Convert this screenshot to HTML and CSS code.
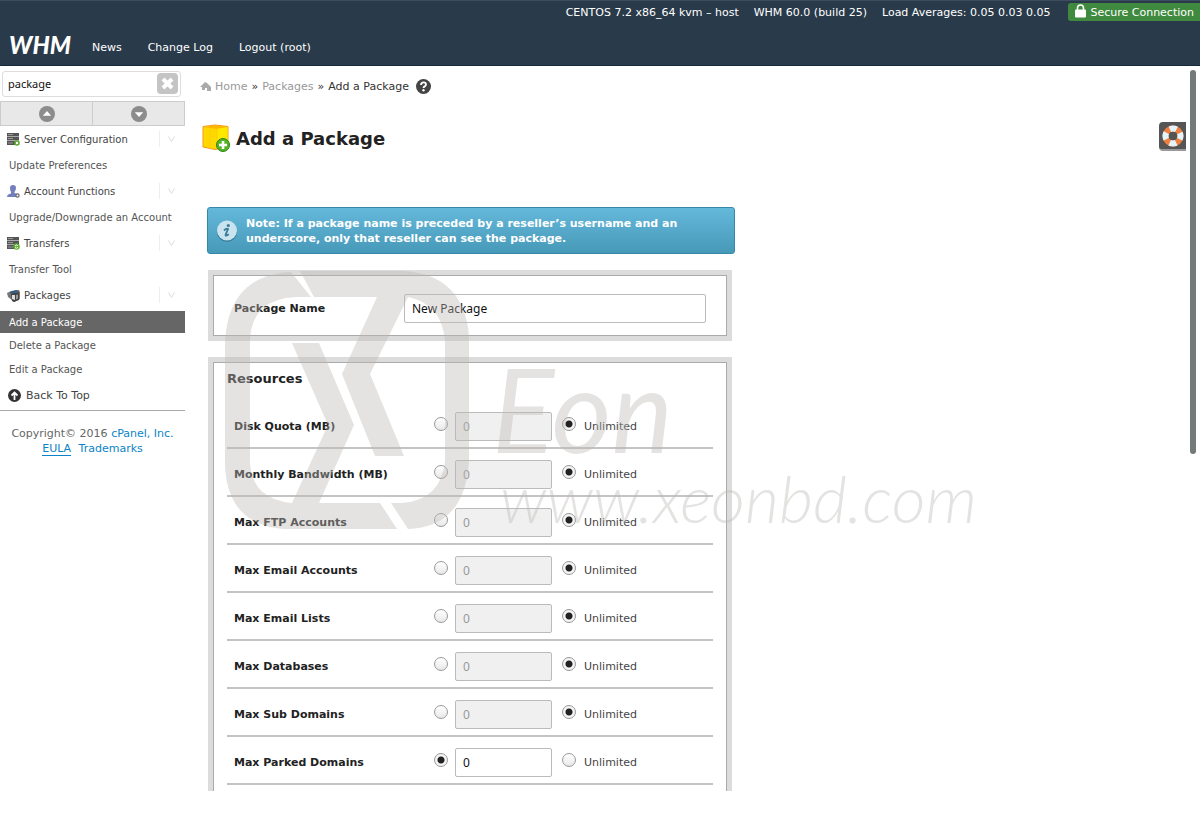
FILE: index.html
```html
<!DOCTYPE html>
<html lang="en">
<head>
    <meta charset="UTF-8">
    <meta name="viewport" content="width=device-width, initial-scale=1.0">
    <title>WHM - Add a Package</title>
    <link rel="stylesheet" href="styles.css">
</head>
<body>
    <header class="topbar">
        <div class="server-info">
            <span>CENTOS 7.2 x86_64 kvm – host</span>
            <span>WHM 60.0 (build 25)</span>
            <span>Load Averages: 0.05 0.03 0.05</span>
            <span class="secure">
                <svg width="11" height="14" viewBox="0 0 11 14"><path d="M2.5 7V4a3 3 0 0 1 6 0v3" fill="none" stroke="#fff" stroke-width="1.6"/><rect y="5.5" width="11" height="8" rx="1" fill="#fff"/></svg>
                Secure Connection
            </span>
        </div>
        <nav class="topnav">
            <span class="logo">WHM</span>
            <a href="#">News</a>
            <a href="#">Change Log</a>
            <a href="#">Logout (root)</a>
        </nav>
    </header>

    <div class="page">
        <aside class="sidebar">
            <div class="search">
                <input type="text" class="search-input" value="package" aria-label="Find">
                <button type="button" class="clear-btn" aria-label="Clear">
                    <svg width="13" height="13" viewBox="0 0 13 13"><path d="M2 2l9 9M11 2l-9 9" stroke="#fff" stroke-width="4"/></svg>
                </button>
            </div>
            <div class="toggles">
                <button type="button" aria-label="Collapse all"><svg width="16" height="16" viewBox="0 0 16 16"><circle cx="8" cy="8" r="8" fill="#8c8c8c"/><path d="M3.8 9.8L8 5l4.2 4.8z" fill="#fff"/></svg></button>
                <button type="button" aria-label="Expand all"><svg width="16" height="16" viewBox="0 0 16 16"><circle cx="8" cy="8" r="8" fill="#8c8c8c"/><path d="M3.8 6.2L8 11l4.2-4.8z" fill="#fff"/></svg></button>
            </div>
            <nav class="menu">
                <div class="group">
                    <svg width="13" height="13" viewBox="0 0 13 13"><path d="M0 0h12v3.5H0zM0 4h12v3.5H0zM0 8h12v4H0z" fill="#555"/><path d="M1 1.5h5M1 5.5h5M1 10h5" stroke="#999"/><circle cx="10" cy="10" r="2" fill="#fff" stroke="#5cab2b" stroke-width="1.6"/></svg>
                    <a href="#">Server Configuration</a>
                    <svg class="chevron" width="7" height="6" viewBox="0 0 7 6"><path d="M.5.5l3 5 3-5" fill="none" stroke="#ddd"/></svg>
                </div>
                <a class="item" href="#">Update Preferences</a>
                <div class="group">
                    <svg width="13" height="13" viewBox="0 0 13 13"><path d="M3 3q0-3 3-3t3 3q0 2-1.5 4v1l2.5 1v3H0q0-3 4-3.5V7Q3 5 3 3z" fill="#7380bd"/><circle cx="10.5" cy="10.5" r="1.6" fill="#fff" stroke="#666" stroke-width="1.2"/></svg>
                    <a href="#">Account Functions</a>
                    <svg class="chevron" width="7" height="6" viewBox="0 0 7 6"><path d="M.5.5l3 5 3-5" fill="none" stroke="#ddd"/></svg>
                </div>
                <a class="item" href="#">Upgrade/Downgrade an Account</a>
                <div class="group">
                    <svg width="13" height="13" viewBox="0 0 13 13"><path d="M0 0h12v3.5H0zM0 4h12v3.5H0zM0 8h12v4H0z" fill="#555"/><path d="M1 1.5h5M1 5.5h5M1 10h5" stroke="#999"/><circle cx="9.5" cy="9.5" r="3.2" fill="#5cab2b"/><path d="M8 9q2-2 3 0M11 10.5q-2 1.5-3 0" fill="none" stroke="#fff"/></svg>
                    <a href="#">Transfers</a>
                    <svg class="chevron" width="7" height="6" viewBox="0 0 7 6"><path d="M.5.5l3 5 3-5" fill="none" stroke="#ddd"/></svg>
                </div>
                <a class="item" href="#">Transfer Tool</a>
                <div class="group">
                    <svg width="13" height="13" viewBox="0 0 13 13"><path d="M0 4l4-2 8-1 1 2v7l-6 3-2-2-4-3z" fill="#777"/><path d="M3 3l6-2 3 1-5 2-3 1z" fill="#2c5d86"/><path d="M4 5l3-1 5-1v8l-5 2-2-1z" fill="#444"/><path d="M5 6h3v5l-3-1z" fill="#ddd"/><path d="M9 6l2-.5v4l-2 1z" fill="#999"/></svg>
                    <a href="#">Packages</a>
                    <svg class="chevron" width="7" height="6" viewBox="0 0 7 6"><path d="M.5.5l3 5 3-5" fill="none" stroke="#ddd"/></svg>
                </div>
                <a class="item active" href="#">Add a Package</a>
                <a class="item small" href="#">Delete a Package</a>
                <a class="item small" href="#">Edit a Package</a>
                <a class="back-top" href="#">
                    <svg width="13" height="13" viewBox="0 0 13 13"><circle cx="6.5" cy="6.5" r="6.5" fill="#333"/><path d="M6.5 11V4M3.5 6.5l3-3 3 3" fill="none" stroke="#fff" stroke-width="1.8"/></svg>
                    Back To Top
                </a>
            </nav>
            <footer class="copyright">
                <div>Copyright© 2016 <a href="#">cPanel, Inc.</a></div>
                <div><a class="eula" href="#">EULA</a> <a href="#">Trademarks</a></div>
            </footer>
        </aside>

        <main class="content">
            <nav class="breadcrumb">
                <svg width="11" height="10" viewBox="0 0 11 10"><path d="M0 5l5-5 2 1 4 4v4H7V6H5v2H2V5z" fill="#aaa"/></svg>
                <a href="#">Home</a>
                <span>»</span>
                <a href="#">Packages</a>
                <span>»</span>
                <span>Add a Package</span>
                <svg class="help" width="15" height="15" viewBox="0 0 14 14"><circle cx="7" cy="7" r="7" fill="#444"/><path d="M4.7 5.500q0-2.300 2.300-2.300t2.300 1.900q0 1.100-1.200 1.800-1.100.6-1.100 1.600" fill="none" stroke="#fff" stroke-width="1.7"/><circle cx="7" cy="10.5" r="1.1" fill="#fff"/></svg>
            </nav>

            <h1 class="title">
                <svg width="28" height="28" viewBox="0 0 28 28"><path d="M1 2.500L13 1l13 1.500V23l-13 2.500L1 23z" fill="#ffd800" stroke="#f49a1a"/><path d="M1.500 3L13 1.500 25.500 3 15 5z" fill="#ffb400"/><path d="M15 5l10.500-2v19.500L15 25z" fill="#ffe800"/><path d="M15 5v19M8 5v18" stroke="#ffcb00"/><circle cx="21" cy="21" r="6.5" fill="#54b421" stroke="#2f8419"/><path d="M21 17v8M17 21h8" stroke="#fff" stroke-width="2.6"/></svg>
                Add a Package
            </h1>

            <div class="notice">
                <svg width="22" height="22" viewBox="0 0 22 22"><circle cx="11" cy="12" r="10" fill="#397d98"/><circle cx="11" cy="10.5" r="10" fill="#c9e4ef"/><circle cx="12.3" cy="5.5" r="1.6" fill="#397d98"/><path d="M8 10.500q2.500-2.500 4-1.500l-2.500 6q0 1.500 3.300-.8" fill="none" stroke="#397d98" stroke-width="1.8"/></svg>
                <p>Note: If a package name is preceded by a reseller’s username and an underscore, only that reseller can see the package.</p>
            </div>

            <form>
                <section class="panel name-panel">
                    <label for="pkgname">Package Name</label>
                    <input type="text" id="pkgname" class="field name-field" value="New Package">
                </section>

                <section class="panel resources">
                    <h2>Resources</h2>
                    <div class="row">
                        <label for="quota">Disk Quota (MB)</label>
                        <input type="radio" name="r-quota" aria-label="Limit disk quota">
                        <input type="text" id="quota" class="field" value="0" disabled>
                        <input type="radio" name="r-quota" id="quota-u" checked>
                        <label class="unlimited" for="quota-u">Unlimited</label>
                    </div>
                    <div class="row">
                        <label for="bw">Monthly Bandwidth (MB)</label>
                        <input type="radio" name="r-bw" aria-label="Limit bandwidth">
                        <input type="text" id="bw" class="field" value="0" disabled>
                        <input type="radio" name="r-bw" id="bw-u" checked>
                        <label class="unlimited" for="bw-u">Unlimited</label>
                    </div>
                    <div class="row">
                        <label for="ftp">Max FTP Accounts</label>
                        <input type="radio" name="r-ftp" aria-label="Limit FTP accounts">
                        <input type="text" id="ftp" class="field" value="0" disabled>
                        <input type="radio" name="r-ftp" id="ftp-u" checked>
                        <label class="unlimited" for="ftp-u">Unlimited</label>
                    </div>
                    <div class="row">
                        <label for="email">Max Email Accounts</label>
                        <input type="radio" name="r-email" aria-label="Limit email accounts">
                        <input type="text" id="email" class="field" value="0" disabled>
                        <input type="radio" name="r-email" id="email-u" checked>
                        <label class="unlimited" for="email-u">Unlimited</label>
                    </div>
                    <div class="row">
                        <label for="lists">Max Email Lists</label>
                        <input type="radio" name="r-lists" aria-label="Limit email lists">
                        <input type="text" id="lists" class="field" value="0" disabled>
                        <input type="radio" name="r-lists" id="lists-u" checked>
                        <label class="unlimited" for="lists-u">Unlimited</label>
                    </div>
                    <div class="row">
                        <label for="db">Max Databases</label>
                        <input type="radio" name="r-db" aria-label="Limit databases">
                        <input type="text" id="db" class="field" value="0" disabled>
                        <input type="radio" name="r-db" id="db-u" checked>
                        <label class="unlimited" for="db-u">Unlimited</label>
                    </div>
                    <div class="row">
                        <label for="sub">Max Sub Domains</label>
                        <input type="radio" name="r-sub" aria-label="Limit sub domains">
                        <input type="text" id="sub" class="field" value="0" disabled>
                        <input type="radio" name="r-sub" id="sub-u" checked>
                        <label class="unlimited" for="sub-u">Unlimited</label>
                    </div>
                    <div class="row">
                        <label for="parked">Max Parked Domains</label>
                        <input type="radio" name="r-parked" aria-label="Limit parked domains" checked>
                        <input type="text" id="parked" class="field" value="0">
                        <input type="radio" name="r-parked" id="parked-u">
                        <label class="unlimited" for="parked-u">Unlimited</label>
                    </div>
                </section>
            </form>
        </main>

        <!-- Support tab and scroll thumb -->
        <button type="button" class="support" aria-label="Support">
            <svg width="22" height="22" viewBox="0 0 22 22"><circle cx="11" cy="11" r="7.5" fill="none" stroke="#f08040" stroke-width="6"/><circle cx="11" cy="11" r="7.5" fill="none" stroke="#e4f4fa" stroke-width="6" stroke-dasharray="6.78 5" stroke-dashoffset="3.39"/></svg>
        </button>
        <div class="thumb"></div>

        <!-- Watermark -->
        <div class="watermark">
            <svg class="mark" width="246" height="260" viewBox="0 0 246 260">
                <path d="M67 1L87 26H72Q28 28 26 68V192Q28 228 68 232L104 154 68 72H95L130 154 95 232H156L173 258H60Q4 254 1 195V70Q5 4 67 1z"/>
                <path d="M76 0H180Q240 4 245 65V190Q241 256 184 258L167 232H178Q217 229 221 190V70Q218 33 184 26L146 103 180 185H151L118 103 153 26H90z"/>
            </svg>
            <span class="mark-name">Eon</span>
            <span class="mark-url">www.xeonbd.com</span>
        </div>
    </div>
</body>
</html>
```
FILE: styles.css
```css
* {
    box-sizing: border-box;
}

body {
    margin: 0;
    height: 100vh;
    overflow: hidden;
    display: flex;
    flex-direction: column;
    background: #fff;
    color: #333;
    font-family: "DejaVu Sans", Verdana, sans-serif;
    font-size: 11px;
}

a {
    color: inherit;
    text-decoration: none;
}

svg {
    flex: none;
}

button {
    border: none;
    padding: 0;
    display: flex;
    align-items: center;
    justify-content: center;
}

/* Top bar */
.topbar {
    height: 66px;
    flex: none;
    background: #293a4a;
    border-top: 1px solid #3b4d5e;
    border-bottom: 1px solid #15293d;
    color: #fff;
}

.server-info {
    display: flex;
    justify-content: flex-end;
    align-items: center;
    gap: 15px;
    height: 22px;
}

.secure {
    display: flex;
    align-items: center;
    gap: 4px;
    height: 18px;
    margin-left: 3px;
    padding: 0 6px 0 7px;
    background: #3f8a3f;
    border-radius: 3px 0 0 3px;
}

.secure svg {
    margin-bottom: 3px;
}

.topnav {
    display: flex;
    align-items: center;
    gap: 26px;
    height: 42px;
    padding: 6px 0 0 9px;
}

.logo {
    margin-right: -5px;
    padding-bottom: 4px;
    font-family: Lato, sans-serif;
    font-size: 24px;
    font-weight: 900;
    font-style: italic;
    line-height: 24px;
}

.page {
    position: relative;
    display: flex;
    flex: 1;
    min-height: 0;
    padding-bottom: 29px;
}

/* Sidebar */
.sidebar {
    width: 185px;
    flex: none;
}

.search {
    display: flex;
    align-items: center;
    justify-content: space-between;
    height: 26px;
    margin: 5px 4px 4px 2px;
    padding: 0 2px 2px 5px;
    border: 1px solid #ddd;
    border-radius: 3px;
}

.search-input {
    width: 140px;
    border: none;
    padding: 0;
    outline: none;
    color: #111;
    font-family: "Noto Sans", sans-serif;
    font-size: 11px;
}

.clear-btn {
    width: 21px;
    height: 21px;
    border-radius: 4px;
    background: #c4c4c4;
}

.toggles {
    display: flex;
    height: 25px;
    border: 1px solid #ccc;
}

.toggles button {
    flex: 1;
    background: #e8e8e8;
}

.toggles button + button {
    border-left: 1px solid #ccc;
}

.menu {
    border-bottom: 1px solid #aaa;
    color: #444;
    font-size: 10px;
}

.group {
    display: flex;
    align-items: center;
    gap: 4px;
    height: 26px;
    padding: 0 10px 0 7px;
}

.group a {
    flex: 1;
}

.chevron {
    box-sizing: content-box;
    padding: 5px 0 5px 8px;
    border-left: 1px solid #eee;
}

.item {
    display: flex;
    align-items: center;
    height: 26px;
    padding-left: 9px;
    color: #555;
}

.item.active {
    height: 22px;
    margin-top: 3px;
    background: #666;
    color: #fff;
}

.item.small {
    height: 24px;
}

.back-top {
    display: flex;
    align-items: center;
    gap: 5px;
    height: 29px;
    padding-left: 8px;
    font-size: 11px;
}

.copyright {
    margin-top: 15px;
    line-height: 15px;
    text-align: center;
    color: #666;
}

.copyright a {
    color: #0a84c6;
}

.copyright .eula {
    margin-right: 4px;
    border-bottom: 1px solid #0a84c6;
}

/* Main content */
.content {
    flex: 1;
    min-width: 0;
    overflow: hidden;
    padding-left: 15px;
}

.breadcrumb {
    display: flex;
    align-items: center;
    gap: 4px;
    height: 41px;
}

.breadcrumb a {
    color: #999;
}

.help {
    margin-left: 3px;
}

.title {
    display: flex;
    align-items: center;
    gap: 6px;
    height: 26px;
    margin: 18px 0 56px 2px;
    color: #222;
    font-size: 18px;
}

.notice {
    display: flex;
    align-items: center;
    gap: 8px;
    width: 528px;
    max-width: 100%;
    height: 47px;
    margin: 0 0 16px 7px;
    padding: 0 9px 0 8px;
    border: 1px solid #3588a8;
    border-radius: 3px;
    background: linear-gradient(#64b8da, #4799b8);
    color: #fff;
    font-weight: bold;
    line-height: 15px;
}

.notice p {
    margin: 0;
}

.panel {
    width: 524px;
    max-width: 100%;
    margin: 0 0 16px 8px;
    border: 5px solid #dcdcdc;
    outline: 1px solid #aaa;
    outline-offset: -6px;
}

.panel label {
    color: #222;
    font-weight: bold;
}

.name-panel {
    display: flex;
    align-items: center;
    height: 71px;
    padding: 8px 21px 2px;
}

.name-panel label {
    width: 170px;
}

.field {
    width: 97px;
    height: 29px;
    padding: 0 7px;
    border: 1px solid #bbb;
    border-radius: 2px;
    background: #fff;
    color: #111;
    font-family: "Noto Sans", sans-serif;
    font-size: 12px;
}

.field:disabled {
    background: #f0f0f0;
    color: #999;
}

.name-field {
    width: 302px;
}

.resources {
    padding: 9px 14px 40px;
}

.resources h2 {
    margin: 0 0 14px;
    color: #222;
    font-size: 13px;
    line-height: 16px;
}

.row {
    display: flex;
    align-items: center;
    height: 48px;
    padding: 4px 7px 0;
    border-bottom: 2px solid #c4c4c4;
}

.row label:first-child {
    width: 200px;
}

.row .field {
    margin: 0 10px 0 7px;
}

.row .unlimited {
    margin-left: 8px;
    color: #444;
    font-weight: normal;
}

input[type="radio"] {
    appearance: none;
    width: 14px;
    height: 14px;
    margin: 0 0 5px;
    border: 1px solid #999;
    border-radius: 50%;
    background: linear-gradient(#fff, #e8e8e8);
}

input[type="radio"]:checked {
    background: radial-gradient(circle, #222 3px, #f4f4f4 4px);
}

/* Right edge */
.support {
    position: absolute;
    top: 56px;
    right: 14px;
    width: 27px;
    height: 29px;
    border-radius: 4px 0 0 4px;
    border-bottom: 2px solid #999;
    background: #555;
}

.thumb {
    position: absolute;
    top: 4px;
    right: 4px;
    width: 6px;
    height: 384px;
    border-radius: 3px;
    background: #737a79;
}

/* Watermark over the form */
.watermark {
    position: absolute;
    top: 205px;
    left: 224px;
    opacity: 0.4;
    color: #bcb9b5;
    pointer-events: none;
    white-space: nowrap;
}

.mark {
    display: block;
    fill: #bcb9b5;
}

.mark-name,
.mark-url {
    position: absolute;
    font-family: Lato, sans-serif;
    font-style: italic;
    font-weight: 300;
    line-height: 1;
}

.mark-name {
    top: 80px;
    left: 268px;
    font-size: 116px;
    font-weight: 400;
}

.mark-url {
    top: 194px;
    left: 276px;
    font-size: 66px;
}
```
